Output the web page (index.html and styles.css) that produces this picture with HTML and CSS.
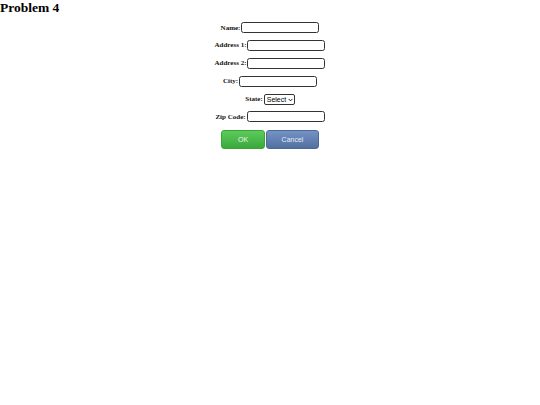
FILE: index.html
```html
<!DOCTYPE html>
<html>
<head>
    <title>Problem 4</title>
    <meta charset="UTF-8">
    <meta name="viewport" content="width=device-width, initial-scale=1.0">
    <link rel="stylesheet" href="styles.css">
</head>
<body class="page">
    <h1 class="title">Problem 4</h1>

    <form class="address-form">
        <div class="row">
            <label for="name">Name:</label>
            <input type="text" id="name" class="field">
        </div>
        <div class="row">
            <label for="addr1">Address 1:</label>
            <input type="text" id="addr1" class="field">
        </div>
        <div class="row">
            <label for="addr2">Address 2:</label>
            <input type="text" id="addr2" class="field">
        </div>
        <div class="row">
            <label for="city">City:</label>
            <input type="text" id="city" class="field">
        </div>
        <div class="row">
            <label for="state">State:</label>
            <span class="select-wrap">
                <select id="state" class="state-select">
                    <option>Select</option>
                    <option>AL</option>
                    <option>AK</option>
                    <option>AZ</option>
                </select>
                <!-- small down arrow for the select -->
                <svg class="chevron" width="5" height="4" viewBox="0 0 5 4">
                    <path d="M0.6 0.9 L2.5 2.9 L4.4 0.9" fill="none" stroke="#111" stroke-width="0.9"/>
                </svg>
            </span>
        </div>
        <div class="row">
            <label for="zip">Zip Code:</label>
            <input type="text" id="zip" class="field">
        </div>

        <div class="buttons">
            <button type="submit" class="btn btn-ok">OK</button>
            <button type="reset" class="btn btn-cancel">Cancel</button>
        </div>
    </form>
</body>
</html>
```

FILE: styles.css
```css
.page{
margin: 0;
background: #ffffff;
font-family: "Liberation Serif", "Times New Roman", serif;
}

.title{
margin: 0;
font-size: 13.5px;
line-height: 16px;
font-weight: bold;
color: #000;
}

.address-form{
display: flex;
flex-direction: column;
align-items: center;
gap: 6.9px;
margin-top: 6px;
}

.row{
display: flex;
align-items: center;
gap: 1px;
height: 11px;
}

.row label{
font-size: 7px;
font-weight: bold;
color: #111;
}

.field{
box-sizing: border-box;
width: 78px;
height: 11px;
padding: 0 2px;
border: 1.5px solid #333;
border-radius: 2.5px;
background: #fff;
font-size: 7px;
outline: none;
}

.select-wrap{
position: relative;
display: inline-flex;
}

.state-select{
appearance: none;
-webkit-appearance: none;
box-sizing: border-box;
width: 31px;
height: 11px;
padding: 0 0 0 2px;
border: 1px solid #333;
border-radius: 2px;
background: #fff;
font-family: "Liberation Sans", Arial, sans-serif;
font-size: 7px;
line-height: 9px;
color: #000;
}

.chevron{
position: absolute;
right: 2px;
top: 4px;
pointer-events: none;
}

.buttons{
display: flex;
gap: 1px;
margin-top: 0.5px;
}

.btn{
box-sizing: border-box;
height: 19px;
border-radius: 3px;
font-family: "Liberation Sans", Arial, sans-serif;
font-size: 7px;
color: #eef3ee;
cursor: pointer;
}

.btn-ok{
width: 44px;
border: 1px solid #35a735;
background: linear-gradient(#5ccb5c, #3aa83a);
}

.btn-cancel{
width: 53px;
border: 1px solid #4c679a;
background: linear-gradient(#7592c6, #52709f);
color: #e6ecf6;
}
```
